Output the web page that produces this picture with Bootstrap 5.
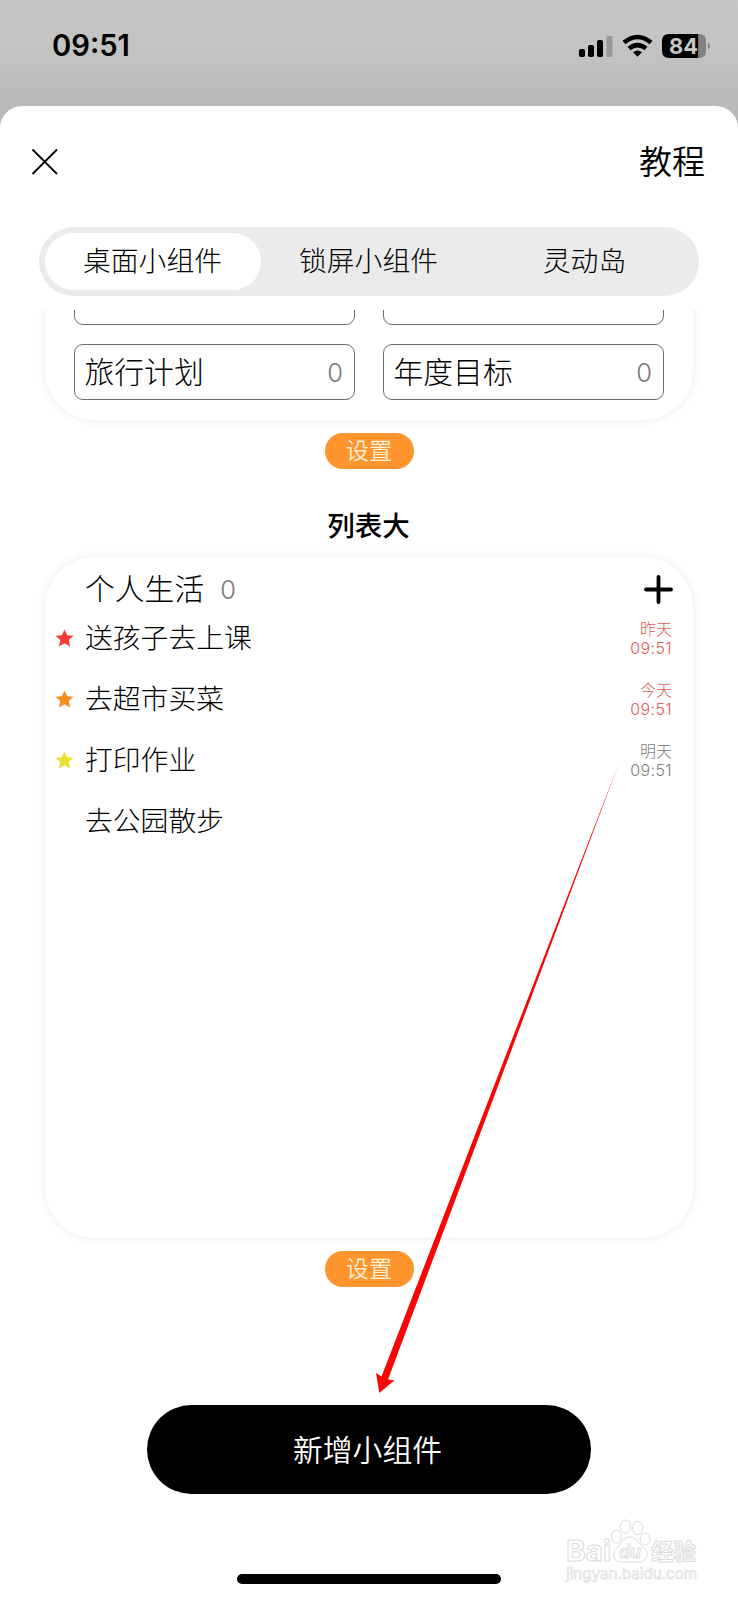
<!DOCTYPE html>
<html lang="zh-CN">
<head>
<meta charset="utf-8">
<meta name="viewport" content="width=device-width, initial-scale=1">
<title>小组件</title>
<link href="https://cdn.jsdelivr.net/npm/bootstrap@5.3.0/dist/css/bootstrap.min.css" rel="stylesheet">
<style>
body{font-family:Inter,"Noto Sans CJK SC",sans-serif;font-weight:300;color:#000;background:linear-gradient(#c7c6c4 0,#c4c4c2 45px,#b9bbb8 106px,#b5b7b4 130px,#fff 130px);line-height:1}
.screen{height:1600px}
.statusbar{height:106px;padding:29px 28px 0 52px}
.clock{font-size:29.2px;font-weight:600;line-height:34px}
.sheet{height:1494px;border-radius:22px 22px 0 0}
.topbar{height:121px;padding:0 33px 10px 31px}
.topbar .link-help{font-size:33px;font-weight:350;line-height:40px;padding-top:1px}
.segments{height:69px;margin:0 39px;padding:6px;background:#ebebeb}
.segments .nav-link{color:#000;font-size:27.8px;line-height:1;padding:1px 1px 0 0}
.segments .nav-link.active{background:#fff;color:#000}
.viewer{height:1080px;margin-top:14px;padding:0 45px}
.widget{border-radius:50px;box-shadow:0 0 10px rgba(0,0,0,.09)}
.w-medium{height:210px;margin-top:-100px;padding:0 29px 20px}
.cell{height:56px;border:1px solid #6c6c6c;border-radius:9px;padding:2px 11px 0 9.500px;font-size:29.8px}
.w-medium .row{--bs-gutter-x:28px;--bs-gutter-y:19px}
.num{color:#777;font-size:25.5px}
.setbtn{--bs-btn-padding-y:0;--bs-btn-padding-x:0;width:89px;height:36px;background:#ff952c;color:#fff0d8;font-size:23.2px;font-weight:350;line-height:36px;border:0}
.setrow{padding-top:13px}
.w-title{font-size:27.5px;font-weight:500;height:88px;padding:27px 1px 0 0}
.w-large{height:681px}
.w-head{height:51px;padding:15px 20px 0 40px;font-size:29.8px}
.w-head svg{margin-top:-2px}
.todo{height:61px;padding:0 21px 0 10px;font-size:27.8px}
.todo svg{margin-right:11px}
.due{font-size:16px;line-height:19px;color:#7d7d7d}
.due .hm{letter-spacing:.4px}
.due.late{color:#e25a56}
.addbtn{width:444px;height:89px;margin-top:15px;font-size:29.8px;font-weight:350;background:#000;color:#fff;line-height:1;padding:2px 3px 0 0;border:0}
.homebar{width:264px;height:10px;margin-top:80px}
.arrow{left:0;top:0;pointer-events:none}
.wmark{left:560px;top:1512px}
</style>
</head>
<body>
<div class="screen position-relative overflow-hidden">
  <header class="statusbar d-flex justify-content-between align-items-start">
    <div class="clock">09:51</div>
    <svg width="132" height="34" viewBox="578 28 132 34" aria-label="信号">
      <rect x="579" y="48" width="6" height="8" rx="1.8"/><rect x="588" y="44" width="6" height="12" rx="1.8"/><rect x="597" y="39" width="6" height="17" rx="1.8"/><rect x="606.500" y="35" width="6" height="21" rx="1.8" fill="#999a98"/>
      <g fill="none" stroke="#000" stroke-width="4.600"><path d="M624 41.500Q637.500 30.500 651 41.500"/><path d="M629 47.500Q637.500 40.800 646 47.500"/></g>
      <path d="M633 51.200Q637.500 47.800 642 51.200L637.500 55.800Z"/>
      <path d="M669 33H698.500V57H669Q662 57 662 50V40Q662 33 669 33Z"/>
      <path d="M698.500 33H699Q706 33 706 40V50Q706 57 699 57H698.500Z" fill="#828381"/>
      <path d="M708 41.500Q710 42.500 710 45Q710 47.500 708 48.500Z" fill="#828381"/>
      <text x="683.500" y="53" text-anchor="middle" font-size="22" font-weight="700" fill="#c7c8c6" textLength="29" lengthAdjust="spacingAndGlyphs">84</text>
    </svg>
  </header>
  <main class="sheet bg-white">
    <div class="topbar d-flex justify-content-between align-items-center">
      <svg width="28" height="28" viewBox="0 0 28 28" stroke="#000" stroke-width="1.800"><path d="M1.500 1.500L26 26M26 1.500L1.500 26"/></svg>
      <span class="link-help">教程</span>
    </div>
    <nav class="segments nav nav-pills nav-fill rounded-pill flex-nowrap">
      <a class="nav-link active rounded-pill w-100 d-flex align-items-center justify-content-center">桌面小组件</a>
      <a class="nav-link w-100 d-flex align-items-center justify-content-center">锁屏小组件</a>
      <a class="nav-link w-100 d-flex align-items-center justify-content-center">灵动岛</a>
    </nav>
    <section class="viewer overflow-hidden">
      <div class="widget w-medium d-flex flex-column justify-content-end">
        <div class="row row-cols-2">
          <div class="col"><div class="cell"></div></div>
          <div class="col"><div class="cell"></div></div>
          <div class="col"><div class="cell d-flex justify-content-between align-items-center"><span>旅行计划</span><span class="num">0</span></div></div>
          <div class="col"><div class="cell d-flex justify-content-between align-items-center"><span>年度目标</span><span class="num">0</span></div></div>
        </div>
      </div>
      <div class="setrow d-flex justify-content-center"><button class="btn setbtn rounded-pill">设置</button></div>
      <div class="w-title d-flex align-items-center justify-content-center">列表大</div>
      <div class="widget w-large">
        <div class="w-head d-flex align-items-center">
          <span>个人生活</span><span class="num ms-3">0</span>
          <svg class="ms-auto" width="29" height="29" viewBox="0 0 29 29" stroke="#000" stroke-width="3.800" stroke-linecap="round"><path d="M14.500 2V27M2 14.500H27"/></svg>
        </div>
        <div class="todo d-flex align-items-center">
          <svg width="19" height="19" viewBox="-10 -10 20 20" fill="#f93a34"><path d="M0-9.500L2.800-3.300L9.500-2.900L4.400 1.700L6 8.300L0 5L-6 8.300L-4.400 1.700L-9.500-2.900L-2.800-3.300Z"/></svg>
          <span>送孩子去上课</span><div class="due late ms-auto text-end">昨天<br><span class="hm">09:51</span></div>
        </div>
        <div class="todo d-flex align-items-center">
          <svg width="19" height="19" viewBox="-10 -10 20 20" fill="#f58c1c"><path d="M0-9.500L2.800-3.300L9.500-2.900L4.400 1.700L6 8.300L0 5L-6 8.300L-4.400 1.700L-9.500-2.900L-2.800-3.300Z"/></svg>
          <span>去超市买菜</span><div class="due late ms-auto text-end">今天<br><span class="hm">09:51</span></div>
        </div>
        <div class="todo d-flex align-items-center">
          <svg width="19" height="19" viewBox="-10 -10 20 20" fill="#ecdf35"><path d="M0-9.500L2.800-3.300L9.500-2.900L4.400 1.700L6 8.300L0 5L-6 8.300L-4.400 1.700L-9.500-2.900L-2.800-3.300Z"/></svg>
          <span>打印作业</span><div class="due ms-auto text-end">明天<br><span class="hm">09:51</span></div>
        </div>
        <div class="todo d-flex align-items-center">
          <svg width="19" height="19"></svg>
          <span>去公园散步</span>
        </div>
      </div>
      <div class="setrow d-flex justify-content-center"><button class="btn setbtn rounded-pill">设置</button></div>
    </section>
    <div class="d-flex justify-content-center"><button class="btn addbtn rounded-pill">新增小组件</button></div>
    <div class="homebar bg-black rounded-pill mx-auto"></div>
  </main>
  <svg class="arrow position-absolute" width="738" height="1600"><path d="M619 763L381.500 1376.500L376 1373L379.300 1393L394.500 1380.200L388 1379.500Z" fill="#fa0505"/></svg>
  <svg class="wmark position-absolute" width="150" height="76" viewBox="560 1512 150 76" fill="#fff" stroke="#dcdcdc" stroke-width="1">
    <text x="566" y="1561" font-size="28" font-weight="700" textLength="45" lengthAdjust="spacingAndGlyphs">Bai</text>
    <ellipse cx="616.500" cy="1536.500" rx="5" ry="6.500"/><ellipse cx="625.500" cy="1526.500" rx="5.300" ry="6.500"/><ellipse cx="637.500" cy="1528" rx="5.300" ry="6.500"/><ellipse cx="645" cy="1539" rx="4.800" ry="6"/>
    <path d="M630 1537C638 1537 639 1545 645 1549C650 1554 646 1562 639 1562C633 1562 627 1562 621 1562C614 1562 611 1554 616 1549C621 1545 622 1537 630 1537Z"/>
    <text x="619" y="1558" font-size="18" font-style="italic" font-weight="600" textLength="22" lengthAdjust="spacingAndGlyphs">du</text>
    <text x="651" y="1560" font-size="23" font-weight="700" textLength="45" lengthAdjust="spacingAndGlyphs">经验</text>
    <text x="566" y="1579" font-size="15" font-weight="400" stroke-width=".7" textLength="131" lengthAdjust="spacingAndGlyphs">jingyan.baidu.com</text>
  </svg>
</div>
<script src="https://cdn.jsdelivr.net/npm/bootstrap@5.3.0/dist/js/bootstrap.bundle.min.js"></script>
</body>
</html>
